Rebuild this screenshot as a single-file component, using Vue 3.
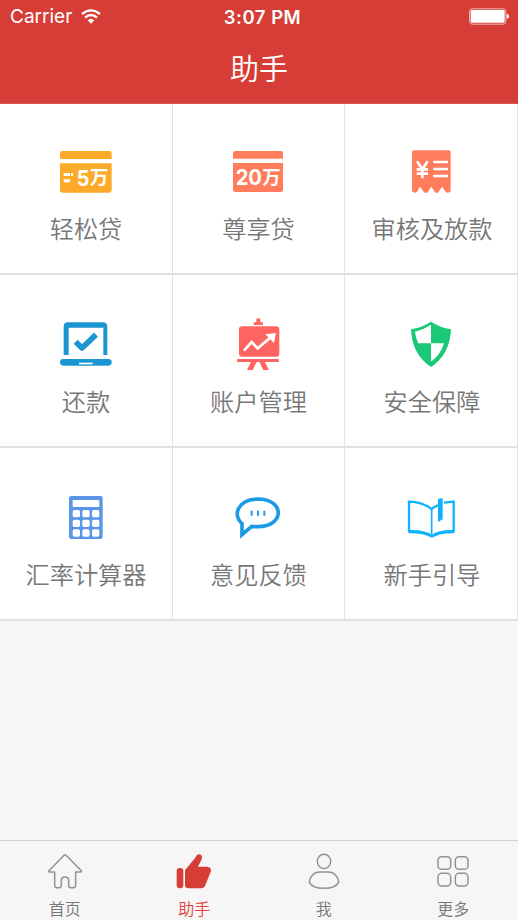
<script setup>
const services = [
  { icon: 'card5', label: '轻松贷', box: '48 6 180 180' },
  { icon: 'card20', label: '尊享贷', box: '57 6 180 180' },
  { icon: 'receipt', label: '审核及放款', box: '111 6 180 180' },
  { icon: 'laptop', label: '还款', box: '48 15 180 180' },
  { icon: 'board', label: '账户管理', box: '87 15 180 180' },
  { icon: 'shield', label: '安全保障', box: '81 15 180 180' },
  { icon: 'calculator', label: '汇率计算器', box: '108 9 180 180' },
  { icon: 'chat', label: '意见反馈', box: '87 9 180 180' },
  { icon: 'book', label: '新手引导', box: '81 9 180 180' },
]

const tabs = [
  { icon: 'home', label: '首页', box: '134 45 120 120' },
  { icon: 'thumb', label: '助手', box: '523 45 120 120', active: true },
  { icon: 'user', label: '我', box: '131 45 120 120' },
  { icon: 'more', label: '更多', box: '520 45 120 120' },
]

const keyRows = [75, 104, 133]
const keyCols = [158, 187, 216]
</script>

<template>
  <div class="screen">
    <header class="header">
      <div class="status">
        <div class="carrier">
          <span>Carrier</span>
          <svg class="wifi" viewBox="0 0 60 45">
            <g fill="none" stroke="#fff" stroke-width="7">
              <path d="M3 15Q30 -7 57 15" />
              <path d="M12 26Q30 10 48 26" />
            </g>
            <path d="M20 34Q30 25 40 34L30 44Z" fill="#fff" />
          </svg>
        </div>
        <div class="time">3:07 PM</div>
        <div class="power">
          <svg class="battery" viewBox="0 0 120 51">
            <rect x="1.5" y="2.5" width="109" height="46" rx="8" fill="none" stroke="#fff" stroke-opacity=".75" stroke-width="2.5" />
            <rect x="5" y="6" width="102" height="38" rx="4" fill="#fff" />
            <path d="M113 17Q120 18 120 25T113 33Z" fill="#fff" />
          </svg>
        </div>
      </div>
      <h1 class="title">助手</h1>
    </header>

    <main class="grid">
      <div v-for="s in services" :key="s.icon" class="cell">
        <svg class="icon" :viewBox="s.box">
          <g v-if="s.icon === 'card5'" fill="#fda929">
            <path d="M60 57V40Q60 33 67 33H208Q215 33 215 40V57Z" />
            <path d="M60 70H215V151Q215 158 208 158H67Q60 158 60 151Z" />
            <path d="M71 99H90V108H71ZM71 118H90V127H71ZM93 99H99V108H93Z" fill="#fff" />
            <text class="figure" x="110" y="137" font-size="65" textLength="38" lengthAdjust="spacingAndGlyphs">5</text>
            <text class="figure" x="149" y="133" font-size="56">万</text>
          </g>
          <g v-else-if="s.icon === 'card20'" fill="#ff7d5c">
            <path d="M69 56V40Q69 33 76 33H212Q219 33 219 40V56Z" />
            <path d="M69 69H219V149Q219 156 212 156H76Q69 156 69 149Z" />
            <text class="figure" x="77" y="136" font-size="65" textLength="79" lengthAdjust="spacingAndGlyphs">20</text>
            <text class="figure" x="157" y="133" font-size="55">万</text>
          </g>
          <g v-else-if="s.icon === 'receipt'">
            <path fill="#ff7d5c" d="M148 31H250Q257 31 257 38V153Q252 160 243 157L231 140L220 157Q215 160 210 157L199 140L188 157Q182 160 177 157L165 140L155 157Q146 160 141 153V38Q141 31 148 31Z" />
            <path d="M156 64L172 88L188 64M172 86V115M155 88H189M155 101H189" fill="none" stroke="#fff" stroke-width="8" />
            <path d="M205 66H249M205 87H249M205 108H249" stroke="#fff" stroke-width="7" />
          </g>
          <g v-else-if="s.icon === 'laptop'" fill="#1b96d0">
            <path d="M71 135V50Q71 37 84 37H189Q202 37 202 50V135H190V53H86V135Z" />
            <rect x="60" y="147" width="155" height="20" rx="10" />
            <rect x="117" y="158" width="41" height="5" fill="#fff" />
            <path d="M107 95L126 114L168 74" fill="none" stroke="#1b96d0" stroke-width="17" stroke-linejoin="round" />
          </g>
          <g v-else-if="s.icon === 'board'" fill="#ff6460">
            <path d="M161 45V37H169V27Q175 22 181 27V37H189V45Z" />
            <rect x="117" y="49" width="121" height="91" rx="9" />
            <rect x="111" y="147" width="126" height="9" rx="3" />
            <path d="M153 155H170L158 180H141ZM178 155H194L207 180H190Z" />
            <path d="M132 122L155 96L173 115L213 81" fill="none" stroke="#fff" stroke-width="8" />
            <path d="M196 73L228 69L222 99Z" fill="#fff" />
          </g>
          <g v-else-if="s.icon === 'shield'">
            <path fill="#1ac975" d="M168 35Q196 53 228 58Q225 134 168 171Q111 134 108 58Q140 53 168 35Z" />
            <path fill="#fff" d="M168 44V100H130Q122 84 120 65Q146 59 168 44ZM168 100H207Q196 136 168 155Z" />
          </g>
          <g v-else-if="s.icon === 'calculator'">
            <rect x="147" y="33" width="101" height="129" rx="7" fill="#5995e8" />
            <rect x="158" y="45" width="80" height="21" rx="2" fill="#fff" />
            <template v-for="y in keyRows" :key="y">
              <rect v-for="x in keyCols" :key="x" :x="x" :y="y" width="22" height="22" rx="5" fill="#fff" />
            </template>
          </g>
          <g v-else-if="s.icon === 'chat'" fill="none" stroke="#1b9be6">
            <path stroke-width="11" stroke-linejoin="miter" d="M126 116C98 93 110 43 174 42C255 43 255 124 174 125Q163 125 155 124L126 149Z" />
            <path stroke-width="6" d="M155 77V92M174 77V92M193 77V92" />
          </g>
          <g v-else fill="none" stroke="#0eb3fc">
            <path stroke-width="7" d="M189 61Q179 64 170 72Q142 51 102 50V139Q145 137 171 153Q194 137 236 139V50Q218 51 207 53" />
            <path stroke-width="5" d="M170 72V151" />
            <path stroke-width="5" d="M102 142Q145 141 171 155Q196 141 236 142" />
            <path fill="#0eb3fc" stroke="none" d="M189 42L203 39V103L189 111Z" />
          </g>
        </svg>
        <span class="label">{{ s.label }}</span>
      </div>
    </main>

    <nav class="tabs">
      <div v-for="t in tabs" :key="t.icon" class="tab" :class="{ active: t.active }">
        <svg class="tab-icon" :viewBox="t.box">
          <g v-if="t.icon === 'thumb'" fill="#d73d37">
            <rect x="531" y="99" width="20" height="61" rx="9" />
            <path d="M556 106L588 67C591 56 604 55 607 65Q608 69 605 75L595 95H622Q635 96 634 108L616 153Q612 160 604 160H567Q556 160 556 150Z" />
          </g>
          <g v-else fill="none" stroke="#929292" stroke-width="4.5" stroke-linejoin="round">
            <path v-if="t.icon === 'home'" d="M191 61Q194 58 197 61L243 107Q245 111 240 111H226V151Q226 158 219 158H211Q205 158 205 151V136Q205 126 194 126T183 136V151Q183 158 177 158H170Q163 158 163 151V111H148Q143 111 146 107Z" />
            <template v-else-if="t.icon === 'user'">
              <ellipse cx="191" cy="79" rx="20" ry="21.500" />
              <path d="M177 111H205C221 111 235 126 235 142C222 166 160 166 147 142C147 126 161 111 177 111Z" />
            </template>
            <template v-else>
              <rect x="535" y="65" width="38" height="38" rx="11" />
              <rect x="587" y="65" width="38" height="38" rx="11" />
              <rect x="535" y="115" width="38" height="38" rx="11" />
              <rect x="587" y="115" width="38" height="38" rx="11" />
            </template>
          </g>
        </svg>
        <span class="tab-label">{{ t.label }}</span>
      </div>
    </nav>
  </div>
</template>

<style>
body {
  margin: 0;
}
</style>

<style scoped>
.screen {
  display: flex;
  flex-direction: column;
  width: 518px;
  height: 920px;
  overflow: hidden;
  background: #f6f6f6;
  font-family: Inter, "Noto Sans CJK SC", sans-serif;
}

.header {
  flex: none;
  box-sizing: border-box;
  height: 104px;
  background: #d63d37;
  border-bottom: 1px solid #d9564f;
  color: #fff;
}

.status {
  display: grid;
  grid-template-columns: 1fr auto 1fr;
  align-items: center;
  height: 33px;
  padding: 0 9px 0 10px;
}

.carrier {
  display: flex;
  align-items: center;
  gap: 9px;
  font-size: 19px;
}

.wifi {
  width: 20px;
  height: 15px;
}

.time {
  padding-left: 6px;
  font-size: 18.5px;
  font-weight: 600;
  letter-spacing: 0.5px;
}

.power {
  display: flex;
  justify-content: flex-end;
}

.battery {
  width: 40px;
  height: 17px;
}

.title {
  margin: 16px 0 0;
  font-size: 29px;
  font-weight: 350;
  line-height: 42px;
  text-align: center;
}

.grid {
  display: grid;
  flex: none;
  grid-template-columns: 173px 172px 173px;
  grid-template-rows: 171px 173px 173px;
}

.cell {
  display: flex;
  flex-direction: column;
  align-items: center;
  justify-content: flex-end;
  gap: 13px;
  box-sizing: border-box;
  padding-bottom: 28px;
  background: #fff;
  border-right: 1px solid #e1e1e1;
  border-bottom: 2px solid #e1e1e1;
}

.cell:nth-child(3n) {
  padding-left: 2px;
}

.icon {
  width: 60px;
  height: 60px;
}

.figure {
  fill: #fff;
  font-family: Inter, "Noto Sans CJK SC", sans-serif;
  font-weight: 700;
}

.label {
  color: #777;
  font-size: 24.2px;
  font-weight: 350;
  line-height: 30px;
  white-space: nowrap;
}

.tabs {
  display: grid;
  grid-template-columns: repeat(4, 1fr);
  box-sizing: border-box;
  height: 80px;
  margin-top: auto;
  border-top: 1px solid #d2d2d2;
}

.tab {
  display: flex;
  flex-direction: column;
  align-items: center;
  gap: 9px;
  padding-top: 9px;
  color: #777;
}

.tab-icon {
  width: 40px;
  height: 40px;
}

.tab-label {
  font-size: 16px;
  font-weight: 350;
  line-height: 20px;
}

.active {
  color: #e2433c;
}
</style>
